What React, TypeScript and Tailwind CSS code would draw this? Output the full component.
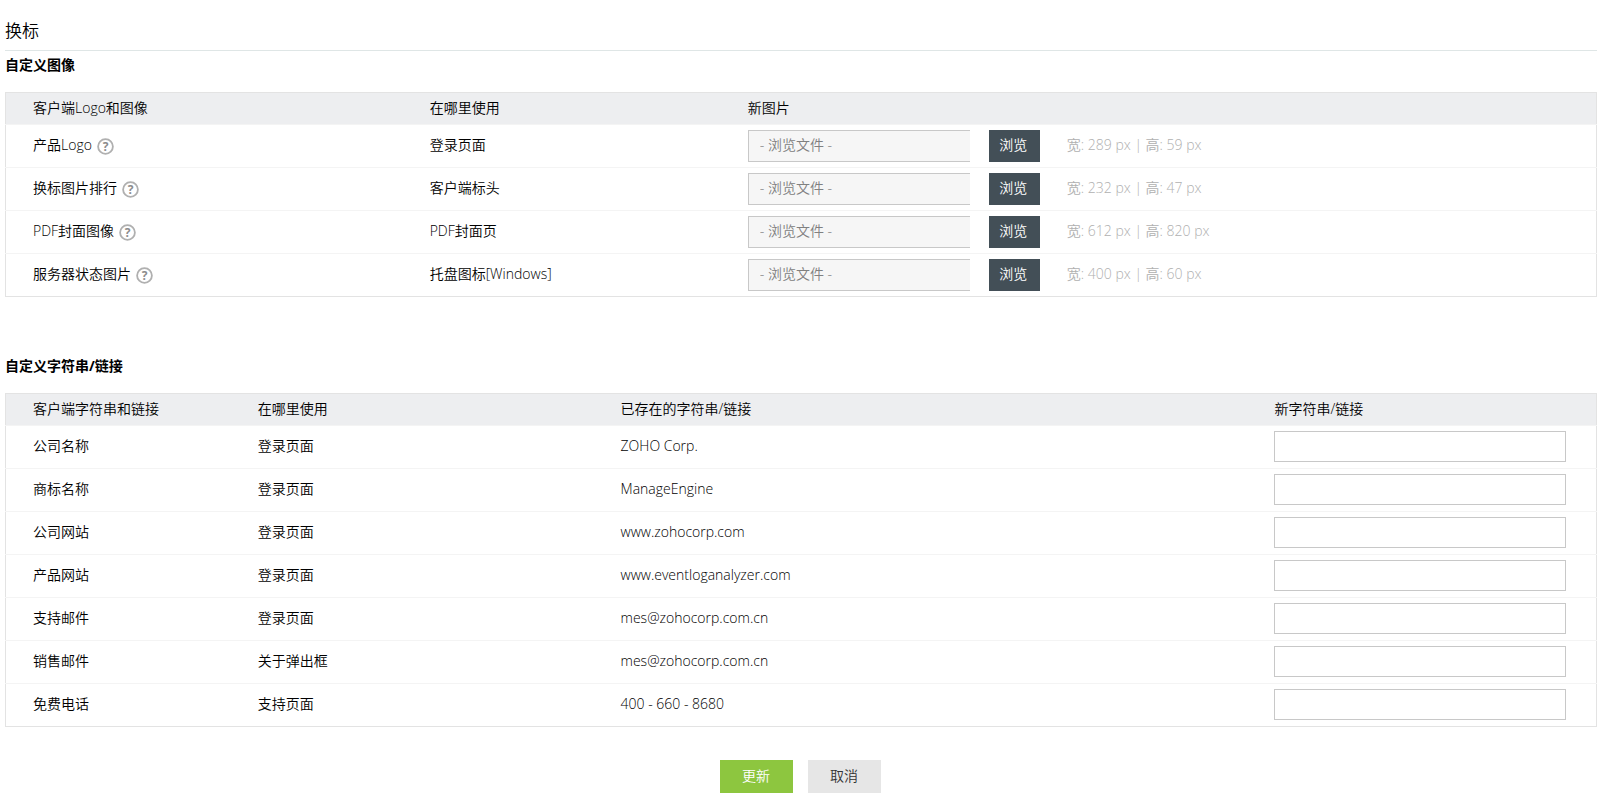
const imageRows = [
  { id: 'logo', label: '产品Logo', usedIn: '登录页面', width: 289, height: 59 },
  { id: 'banner', label: '换标图片排行', usedIn: '客户端标头', width: 232, height: 47 },
  { id: 'pdf-cover', label: 'PDF封面图像', usedIn: 'PDF封面页', width: 612, height: 820 },
  { id: 'server-status', label: '服务器状态图片', usedIn: '托盘图标[Windows]', width: 400, height: 60 },
];

const stringRows = [
  { id: 'company-name', label: '公司名称', usedIn: '登录页面', current: 'ZOHO Corp.' },
  { id: 'brand-name', label: '商标名称', usedIn: '登录页面', current: 'ManageEngine' },
  { id: 'company-site', label: '公司网站', usedIn: '登录页面', current: 'www.zohocorp.com' },
  { id: 'product-site', label: '产品网站', usedIn: '登录页面', current: 'www.eventloganalyzer.com' },
  { id: 'support-mail', label: '支持邮件', usedIn: '登录页面', current: 'mes@zohocorp.com.cn' },
  { id: 'sales-mail', label: '销售邮件', usedIn: '关于弹出框', current: 'mes@zohocorp.com.cn' },
  { id: 'toll-free', label: '免费电话', usedIn: '支持页面', current: '400 - 660 - 8680' },
];

const tableClass = 'w-full table-fixed border-collapse border border-[#e3e3e3] text-left';
const headRowClass = 'h-8 border-b border-[#f4f4f4] bg-[#edeef0]';
const rowClass = 'h-[43px] border-b border-[#f4f4f4] last:border-[#e3e3e3]';
const cellClass = 'pt-0 pb-0.5 pl-7 font-[350] first:pl-[27px]';

function HelpIcon() {
  return (
    <svg viewBox="0 0 17 17" className="mt-0.5 size-[17px]" role="img" aria-label="帮助">
      <circle cx="8.5" cy="8.5" r="7.4" fill="#fff" stroke="#b0b0b0" strokeWidth="1.8" />
      <text x="8.5" y="12.7" textAnchor="middle" fontSize="12" fontWeight="700" fill="#8c8c8c">
        ?
      </text>
    </svg>
  );
}

function ImageTable() {
  return (
    <table className={tableClass}>
      <thead>
        <tr className={headRowClass}>
          <th className={`${cellClass} w-[24.9%]`}>客户端Logo和图像</th>
          <th className={`${cellClass} w-[20%]`}>在哪里使用</th>
          <th className={cellClass}>新图片</th>
        </tr>
      </thead>
      <tbody>
        {imageRows.map((row) => (
          <tr key={row.id} className={rowClass}>
            <td className={cellClass}>
              <div className="flex items-center gap-[5px]">
                <label htmlFor={row.id}>{row.label}</label>
                <HelpIcon />
              </div>
            </td>
            <td className={cellClass}>{row.usedIn}</td>
            <td className="p-0 pl-7">
              <div className="flex items-center">
                <input
                  id={row.id}
                  type="text"
                  readOnly
                  placeholder="- 浏览文件 -"
                  className="h-8 w-[222px] border border-r-0 border-[#c8c8c8] bg-[#f6f6f6] px-[11px] pb-1 placeholder:text-[#808080]"
                />
                <button type="button" className="ml-[19px] h-8 w-[51px] bg-[#434f57] pr-0.5 pb-0.5 text-white">
                  浏览
                </button>
                <span className="ml-[27px] pb-0.5 text-[#b0b0b0]">
                  宽: {row.width} px | 高: {row.height} px
                </span>
              </div>
            </td>
          </tr>
        ))}
      </tbody>
    </table>
  );
}

function StringTable() {
  return (
    <table className={tableClass}>
      <thead>
        <tr className={headRowClass}>
          <th className={`${cellClass} w-[14.1%]`}>客户端字符串和链接</th>
          <th className={`${cellClass} w-[22.8%]`}>在哪里使用</th>
          <th className={`${cellClass} w-[41.1%]`}>已存在的字符串/链接</th>
          <th className={cellClass}>新字符串/链接</th>
        </tr>
      </thead>
      <tbody>
        {stringRows.map((row) => (
          <tr key={row.id} className={rowClass}>
            <td className={cellClass}>
              <label htmlFor={row.id}>{row.label}</label>
            </td>
            <td className={cellClass}>{row.usedIn}</td>
            <td className={cellClass}>{row.current}</td>
            <td className="pt-0 pr-[30px] pb-0.5 pl-7">
              <input id={row.id} type="text" className="block h-[31px] w-full border border-[#c8c8c8] bg-white px-2" />
            </td>
          </tr>
        ))}
      </tbody>
    </table>
  );
}

export default function App() {
  return (
    <form className="bg-white pt-5 pr-3 pl-[5px] font-['Open_Sans','Noto_Sans_CJK_SC',sans-serif] text-sm leading-5 font-[350] text-black">
      <h1 className="h-[31px] border-b border-[#dfe6e6] text-[17px] leading-[22px]">换标</h1>

      <section>
        <h2 className="pt-1 pb-[17px] font-bold">自定义图像</h2>
        <ImageTable />
      </section>

      <section className="mt-14">
        <h2 className="pt-[3px] pb-[17px] font-bold">自定义字符串/链接</h2>
        <StringTable />
      </section>

      <div className="mt-[33px] flex justify-center gap-[15px] pr-0.5 pb-1.5">
        <button type="submit" className="h-[33px] w-[73px] bg-[#8dc63f] pb-0.5 text-white">
          更新
        </button>
        <button type="button" className="h-[33px] w-[73px] bg-[#e6e6e6] pb-0.5 text-[#333]">
          取消
        </button>
      </div>
    </form>
  );
}
